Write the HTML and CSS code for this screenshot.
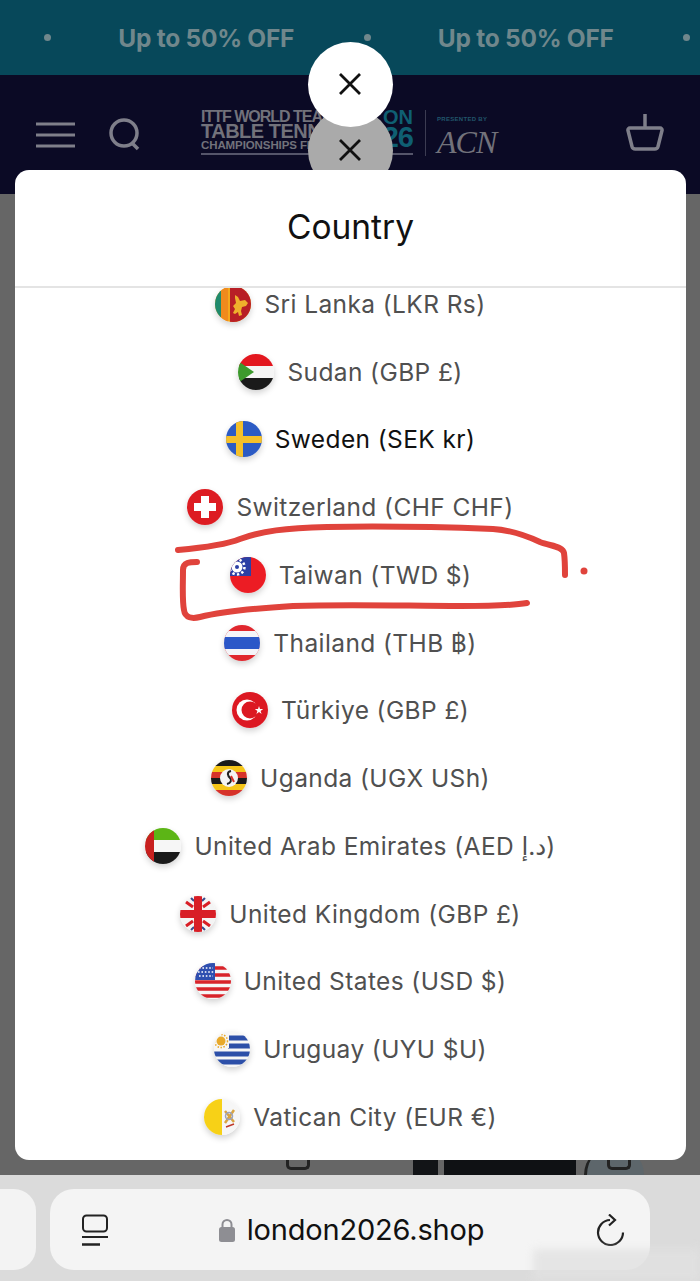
FILE: index.html
```html
<!DOCTYPE html>
<html lang="en">
<head>
  <meta charset="UTF-8">
  <meta name="viewport" content="width=device-width, initial-scale=1.0">
  <title>Country</title>
  <link rel="stylesheet" href="styles.css">
</head>
<body>
  <div class="announce">
    <span class="announce-dot"></span>
    <span class="announce-text">Up to 50% OFF</span>
    <span class="announce-dot"></span>
    <span class="announce-text">Up to 50% OFF</span>
    <span class="announce-dot"></span>
  </div>

  <div class="site-header">
    <div class="header-left">
      <svg class="icon-menu" viewBox="0 0 40 26" width="40" height="26">
        <path d="M0 2h39M0 13h39M0 24h39" stroke="#7f7f8a" stroke-width="3" fill="none"/>
      </svg>
      <svg class="icon-search" viewBox="0 0 32 34" width="32" height="34">
        <circle cx="15" cy="15" r="13" stroke="#7f7f8a" stroke-width="3.500" fill="none"/>
        <path d="M23 25l6 6" stroke="#7f7f8a" stroke-width="3.500" fill="none"/>
      </svg>
    </div>
    <div class="logo">
      <div class="logo-mark">
        <div class="logo-main">
          <div class="logo-line1">ITTF WORLD TEAM</div>
          <div class="logo-line2">TABLE TENNIS</div>
          <div class="logo-line3">CHAMPIONSHIPS FINALS</div>
        </div>
        <div class="logo-city">
          <div class="logo-city-name">ON</div>
          <div class="logo-city-year">26</div>
        </div>
      </div>
      <div class="logo-sponsor">
        <div class="logo-presented">PRESENTED BY</div>
        <div class="logo-acn">ACN</div>
      </div>
    </div>
    <svg class="icon-cart" viewBox="0 0 38 37" width="38" height="37">
      <path d="M19 0v14M4 14h30a2 2 0 0 1 2 2.500l-4 16a3.500 3.500 0 0 1-3.500 2.500h-19a3.500 3.500 0 0 1-3.500-2.500l-4-16a2 2 0 0 1 2-2.500z" stroke="#7f7f8a" stroke-width="3.500" fill="none" stroke-linejoin="round"/>
    </svg>
  </div>

  <div class="page-dim">
    <div class="peek-bag peek-bag-left"></div>
    <div class="peek-shirt">
      <div class="peek-shirt-side"></div>
      <div class="peek-shirt-body"></div>
    </div>
    <div class="peek-circle"></div>
    <div class="peek-bag peek-bag-right"></div>
  </div>

  <div class="browser-bar">
    <div class="tab-stub"></div>
    <div class="url-pill">
      <svg class="icon-tabs" viewBox="0 0 28 32" width="28" height="32">
        <rect x="2" y="1.500" width="24" height="16" rx="3.500" stroke="#222" stroke-width="2" fill="none"/>
        <path d="M1 23h26" stroke="#222" stroke-width="2"/>
        <path d="M1 30.500h18" stroke="#222" stroke-width="2.500"/>
      </svg>
      <div class="url">
        <svg class="icon-lock" viewBox="0 0 16 24" width="16" height="24">
          <path d="M3.500 10V6.500a4.500 4.500 0 0 1 9 0V10" stroke="#8e8e93" stroke-width="2" fill="none"/>
          <rect x="0" y="9" width="16" height="15" rx="2.500" fill="#8e8e93"/>
        </svg>
        <span class="url-text">london2026.shop</span>
      </div>
      <svg class="icon-reload" viewBox="0 0 30 32" width="30" height="32">
        <path d="M27 18.500A12.500 12.500 0 1 1 14 6" stroke="#222" stroke-width="2.200" fill="none"/>
        <path d="M13 0.500l6 5.500-6 5.500" stroke="#222" stroke-width="2.200" fill="none"/>
      </svg>
    </div>
    <div class="watermark"></div>
  </div>

  <!-- overlay -->
  <button class="close-btn close-back">
    <svg viewBox="0 0 24 24" width="24" height="24"><path d="M2 2l20 20M22 2L2 22" stroke="#111" stroke-width="2.800"/></svg>
  </button>
  <button class="close-btn close-front">
    <svg viewBox="0 0 24 24" width="24" height="24"><path d="M2 2l20 20M22 2L2 22" stroke="#111" stroke-width="2.800"/></svg>
  </button>

  <div class="modal">
    <div class="modal-title">Country</div>
    <div class="modal-list">
      <ul class="country-list">
        <li class="country">
          <svg class="flag" viewBox="0 0 36 36">
            <rect width="36" height="36" fill="#f4a81c"/>
            <rect width="6" height="36" fill="#1f8a6d"/>
            <rect x="6" width="7" height="36" fill="#f08a1d"/>
            <rect x="15" width="21" height="36" fill="#b81f26"/>
            <path d="M20 9l3 2 2 4 5-1 3 3-2 3-4 1-1 4 1 4-3 1-1-4-3 2-2-1 2-4-2-3 3-3-1-5z" fill="#efb02c"/>
          </svg>
          <span>Sri Lanka (LKR Rs)</span>
        </li>
        <li class="country">
          <svg class="flag" viewBox="0 0 36 36">
            <rect width="36" height="12" fill="#e3171f"/>
            <rect y="12" width="36" height="12" fill="#f5f5f5"/>
            <rect y="24" width="36" height="12" fill="#1a1a1a"/>
            <path d="M0 7l16 11L0 29z" fill="#3d9a2d"/>
          </svg>
          <span>Sudan (GBP £)</span>
        </li>
        <li class="country country-hover">
          <svg class="flag" viewBox="0 0 36 36">
            <rect width="36" height="36" fill="#2c5bc4"/>
            <rect x="10" width="7" height="36" fill="#f5c02a"/>
            <rect y="15" width="36" height="7" fill="#f5c02a"/>
          </svg>
          <span>Sweden (SEK kr)</span>
        </li>
        <li class="country">
          <svg class="flag" viewBox="0 0 36 36">
            <rect width="36" height="36" fill="#dd1c22"/>
            <path d="M14 7h8v7h7v8h-7v7h-8v-7H7v-8h7z" fill="#fff"/>
          </svg>
          <span>Switzerland (CHF CHF)</span>
        </li>
        <li class="country">
          <svg class="flag" viewBox="0 0 36 36">
            <rect width="36" height="36" fill="#ec1c24"/>
            <rect width="21" height="19" fill="#2b3fa5"/>
            <circle cx="7" cy="10" r="5.500" fill="#fff"/>
            <circle cx="7" cy="10" r="2" fill="#2b3fa5"/>
            <circle cx="7" cy="10" r="7.500" stroke="#fff" stroke-width="2.500" stroke-dasharray="2.400 2.300" fill="none"/>
          </svg>
          <span>Taiwan (TWD $)</span>
        </li>
        <li class="country">
          <svg class="flag" viewBox="0 0 36 36">
            <rect width="36" height="36" fill="#e0272e"/>
            <rect y="6" width="36" height="24" fill="#f4f4f8"/>
            <rect y="12" width="36" height="12" fill="#2b57c8"/>
          </svg>
          <span>Thailand (THB ฿)</span>
        </li>
        <li class="country">
          <svg class="flag" viewBox="0 0 36 36">
            <rect width="36" height="36" fill="#dc1822"/>
            <circle cx="15" cy="18" r="10.500" fill="#fff"/>
            <circle cx="18" cy="18" r="8.500" fill="#dc1822"/>
            <path d="M27 14l1 3 3.200 0-2.600 2 1 3-2.600-1.900-2.600 1.900 1-3-2.600-2 3.200 0z" fill="#fff"/>
          </svg>
          <span>Türkiye (GBP £)</span>
        </li>
        <li class="country">
          <svg class="flag" viewBox="0 0 36 36">
            <rect width="36" height="6" fill="#1a1a1a"/>
            <rect y="6" width="36" height="6" fill="#f5c518"/>
            <rect y="12" width="36" height="6" fill="#d6322a"/>
            <rect y="18" width="36" height="6" fill="#1a1a1a"/>
            <rect y="24" width="36" height="6" fill="#f5c518"/>
            <rect y="30" width="36" height="6" fill="#d6322a"/>
            <circle cx="18" cy="18" r="9" fill="#f4f4f4"/>
            <path d="M20 11c-5 1-3 5-1 7s1 5-3 6" stroke="#222" stroke-width="2" fill="none"/>
            <path d="M20 16l3 6" stroke="#d6322a" stroke-width="2"/>
          </svg>
          <span>Uganda (UGX USh)</span>
        </li>
        <li class="country">
          <svg class="flag" viewBox="0 0 36 36">
            <rect width="36" height="12" fill="#5cb516"/>
            <rect y="12" width="36" height="12" fill="#f6f6f6"/>
            <rect y="24" width="36" height="12" fill="#1a1a1a"/>
            <rect width="9" height="36" fill="#c8201f"/>
          </svg>
          <span>United Arab Emirates (AED د.إ)</span>
        </li>
        <li class="country">
          <svg class="flag" viewBox="0 0 36 36">
            <rect width="36" height="36" fill="#f4f4f4"/>
            <path d="M6 6l7 5M30 6l-7 5M6 30l7-5M30 30l-7-5" stroke="#d81e26" stroke-width="3"/>
            <path d="M11 2l3 3M25 2l-3 3M11 34l3-3M25 34l-3-3" stroke="#3a4a8c" stroke-width="2"/>
            <rect x="14" width="8" height="36" fill="#d81e26"/>
            <rect y="14" width="36" height="8" fill="#d81e26"/>
          </svg>
          <span>United Kingdom (GBP £)</span>
        </li>
        <li class="country">
          <svg class="flag" viewBox="0 0 36 36">
            <rect width="36" height="36" fill="#f6f6f6"/>
            <path d="M0 5h36M0 12h36M0 19h36M0 26h36M0 33h36" stroke="#d8232a" stroke-width="3.500"/>
            <rect width="20" height="17" fill="#2e4fb0"/>
            <path d="M4 5h14M3 9h16M4 13h14" stroke="#fff" stroke-width="1.600" stroke-dasharray="1.600 1.800"/>
          </svg>
          <span>United States (USD $)</span>
        </li>
        <li class="country">
          <svg class="flag" viewBox="0 0 36 36">
            <rect width="36" height="36" fill="#f6f6f6"/>
            <path d="M14 7h22M14 15h22M0 23h36M0 31h36" stroke="#2c4fa8" stroke-width="5"/>
            <rect width="15" height="17" fill="#f6f6f6"/>
            <circle cx="7" cy="10" r="4.500" fill="#e8a92a"/>
            <circle cx="7" cy="10" r="6.500" stroke="#e8a92a" stroke-width="1.500" stroke-dasharray="1.500 1.500" fill="none"/>
          </svg>
          <span>Uruguay (UYU $U)</span>
        </li>
        <li class="country">
          <svg class="flag" viewBox="0 0 36 36">
            <rect width="18" height="36" fill="#f7d117"/>
            <rect x="18" width="18" height="36" fill="#f6f6f6"/>
            <path d="M21 12l9 11M30 11l-9 13" stroke="#d9a441" stroke-width="2.500"/>
            <circle cx="25" cy="17" r="3.500" fill="none" stroke="#9aa3c0" stroke-width="1.500"/>
            <path d="M22 28l8-3" stroke="#c0392b" stroke-width="1.500"/>
          </svg>
          <span>Vatican City (EUR €)</span>
        </li>
      </ul>
    </div>
  </div>

  <!-- red marker drawn on the screenshot -->
  <svg class="marker" viewBox="0 0 700 1281" width="700" height="1281">
    <path d="M178 550C200 548 225 545 240 539C262 531 285 528 327 527C380 526 440 527 493 529C510 530 525 535 540 542C550 546 563 546 564 553C565 560 565 568 565 575" class="marker-line"/>
    <path d="M197 562C190 562 183 562 183 570C183 585 182 600 184 610C185 618 192 619 200 617C220 612 260 608 293 606C350 604 410 606 460 606C485 606 510 606 527 603" class="marker-line"/>
    <circle cx="584" cy="571" r="3.500" fill="#e0433c"/>
  </svg>
</body>
</html>
```

FILE: styles.css
```css
* {
  box-sizing: border-box;
}

body {
  font-family: "Inter", "DejaVu Sans", sans-serif;
  margin: 0;
  width: 700px;
  height: 1281px;
  overflow: hidden;
  position: relative;
  display: flex;
  flex-direction: column;
  background: #666;
}

/* announcement bar */
.announce {
  height: 75px;
  flex-shrink: 0;
  background: #07485a;
  display: flex;
  align-items: center;
  padding: 0 10px 0 44px;
  justify-content: space-between;
}

.announce-dot {
  width: 7px;
  height: 7px;
  border-radius: 50%;
  background: #70878c;
}

.announce-text {
  color: #70878c;
  font-size: 24.500px;
  font-weight: 700;
  letter-spacing: -0.25px;
  margin-left: -2px;
}

/* site header */
.site-header {
  height: 119px;
  flex-shrink: 0;
  background: #0b0a25;
  display: flex;
  align-items: center;
  padding: 0 36px;
}

.header-left {
  display: flex;
  align-items: center;
  gap: 33px;
}

.logo {
  display: flex;
  align-items: flex-start;
  margin-left: 60px;
  height: 46px;
  margin-top: -3px;
  font-family: "Liberation Sans", sans-serif;
  color: #72727b;
}

.logo-mark {
  width: 212px;
  height: 45px;
  display: flex;
  justify-content: space-between;
  border-bottom: 2px solid #55556a;
  font-weight: 700;
  white-space: nowrap;
}

.logo-line1 {
  font-size: 16px;
  line-height: 13px;
  letter-spacing: -1px;
}

.logo-line2 {
  font-size: 20px;
  line-height: 16px;
  letter-spacing: -0.5px;
}

.logo-line3 {
  font-size: 11.500px;
  line-height: 10px;
  letter-spacing: -0.1px;
  margin-top: 1px;
}

.logo-city {
  color: #0f5f72;
  text-align: right;
}

.logo-city-name {
  font-size: 20px;
  line-height: 15px;
}

.logo-city-year {
  font-size: 29px;
  line-height: 24px;
  letter-spacing: -1px;
}

.logo-sponsor {
  margin-left: 12px;
  padding-left: 11px;
  border-left: 1px solid #3c3c52;
  height: 46px;
}

.logo-presented {
  font-size: 6px;
  line-height: 7px;
  font-weight: 700;
  color: #21566b;
  margin-top: 6px;
  letter-spacing: 0.3px;
}

.logo-acn {
  font-family: "Liberation Serif", serif;
  font-style: italic;
  font-size: 32px;
  line-height: 30px;
  letter-spacing: -1px;
  margin-top: 4px;
}

.icon-cart {
  margin-left: auto;
  margin-top: -5px;
  margin-right: 0;
}

/* dimmed page behind the modal */
.page-dim {
  flex: 1;
  background: #666;
  position: relative;
  overflow: hidden;
}

.peek-bag {
  position: absolute;
  bottom: 5px;
  width: 24px;
  height: 12px;
  border: 3px solid #222;
  border-top: none;
  border-radius: 0 0 5px 5px;
}

.peek-bag-left {
  left: 286px;
}

.peek-bag-right {
  left: 607px;
}

.peek-shirt {
  position: absolute;
  left: 413px;
  bottom: 0;
  width: 163px;
  height: 15px;
  display: flex;
  gap: 6px;
}

.peek-shirt-side {
  width: 25px;
  background: #121417;
}

.peek-shirt-body {
  flex: 1;
  background: #0f1114;
}

.peek-circle {
  position: absolute;
  left: 584px;
  bottom: -30px;
  width: 60px;
  height: 60px;
  background: #5d666b;
  border-left: 3px solid #222;
  border-radius: 50%;
}

/* browser bar */
.browser-bar {
  height: 106px;
  flex-shrink: 0;
  background: #dbdbdb;
  display: flex;
  padding: 14px 0 11px;
  gap: 14px;
  position: relative;
}

.tab-stub {
  width: 36px;
  background: #f3f3f3;
  border-radius: 0 22px 22px 0;
}

.url-pill {
  width: 600px;
  background: #f4f4f4;
  border-radius: 24px;
  display: flex;
  align-items: center;
  justify-content: space-between;
  padding: 0 24px 0 31px;
}

.url {
  display: flex;
  align-items: center;
  gap: 12px;
  margin-left: -2px;
}

.url-text {
  font-family: "Inter", sans-serif;
  font-size: 29px;
  color: #111;
  letter-spacing: -0.2px;
}

.watermark {
  position: absolute;
  right: 0;
  bottom: 0;
  width: 167px;
  height: 32px;
  background: #e2e2e2;
  opacity: 0.8;
  filter: blur(4px);
}

/* close buttons */
.close-btn {
  position: absolute;
  left: 308px;
  width: 85px;
  height: 85px;
  border: none;
  border-radius: 50%;
  padding: 0 2px 2px 0;
  display: flex;
  align-items: center;
  justify-content: center;
}

.close-front {
  top: 42px;
  background: #fff;
  z-index: 2;
}

.close-back {
  top: 108px;
  background: #aaa;
}

/* modal */
.modal {
  position: absolute;
  left: 15px;
  top: 170px;
  width: 671px;
  height: 990px;
  background: #fff;
  border-radius: 14px;
  display: flex;
  flex-direction: column;
  z-index: 1;
  overflow: hidden;
}

.modal-title {
  height: 118px;
  flex-shrink: 0;
  display: flex;
  align-items: center;
  justify-content: center;
  font-size: 33.500px;
  color: #111;
  padding-bottom: 2px;
  border-bottom: 2px solid #e4e4e4;
}

.modal-list {
  flex: 1;
  overflow: hidden;
}

.country-list {
  list-style: none;
  margin: -18px 0 0;
  padding: 0;
}

.country {
  height: 67.750px;
  display: flex;
  align-items: center;
  justify-content: center;
  gap: 13px;
  font-size: 24.500px;
  letter-spacing: 0.4px;
  color: #505050;
  white-space: nowrap;
}

.country-hover {
  color: #111;
}

.flag {
  width: 36px;
  height: 36px;
  flex-shrink: 0;
  border-radius: 50%;
  box-shadow: 0 3px 6px rgba(0, 0, 0, 0.18);
}

.marker {
  position: absolute;
  left: 0;
  top: 0;
  z-index: 3;
  pointer-events: none;
}

.marker-line {
  fill: none;
  stroke: #e0433c;
  stroke-width: 6;
  stroke-linecap: round;
}
```
